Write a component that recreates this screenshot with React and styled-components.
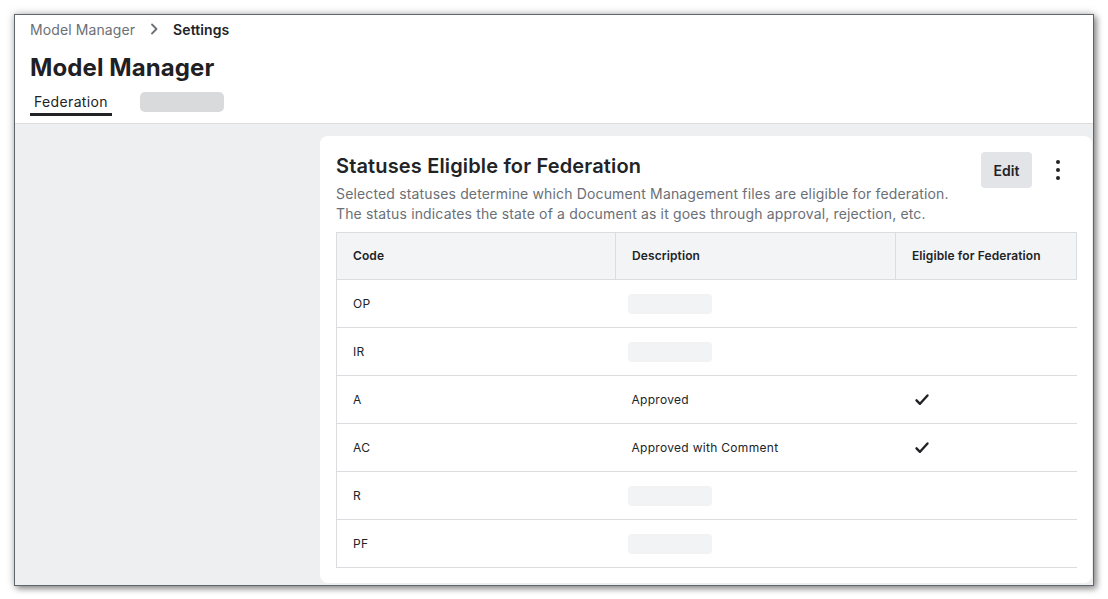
import React from "react";
import styled, { createGlobalStyle } from "styled-components";

const Global = createGlobalStyle`
  html, body { margin: 0; padding: 0; background: #ffffff; }
  body { font-family: Inter, "Noto Sans", "Liberation Sans", sans-serif; color: #222326; }
  * { box-sizing: border-box; }
`;

const Stage = styled.div`
  padding: 14px;
  width: 1108px;
  height: 599px;
`;

const Window = styled.div`
  width: 1080px;
  height: 572px;
  border: 1px solid #5d656e;
  box-shadow: 0 0 8px rgba(0, 0, 0, 0.28), 3px 3px 6px rgba(0, 0, 0, 0.35);
  display: flex;
  flex-direction: column;
  overflow: hidden;
  background: #fff;
`;

const Header = styled.header`
  padding: 4px 15px 0;
  border-bottom: 1px solid #dcdde0;
  flex: 0 0 auto;
  height: 109px;
`;

const Crumbs = styled.nav`
  display: flex;
  align-items: center;
  height: 20px;
  font-size: 14px;
  gap: 11px;
`;

const Crumb = styled.span`
  color: ${(p) => (p.$current ? "#222326" : "#6b6f76")};
  font-weight: ${(p) => (p.$current ? 600 : 400)};
  letter-spacing: 0.1px;
`;

const Title = styled.h1`
  margin: 14px 0 0;
  font-size: 24px;
  line-height: 30px;
  font-weight: 700;
  color: #1f2023;
  letter-spacing: 0.1px;
`;

const Tabs = styled.div`
  display: flex;
  align-items: flex-start;
  gap: 28px;
  margin-top: 9px;
`;

const Tab = styled.div`
  font-size: 14px;
  line-height: 20px;
  padding: 0 4px 1px;
  border-bottom: 3px solid #222326;
  color: #222326;
  letter-spacing: 0.35px;
`;

const TabSkeleton = styled.div`
  width: 84px;
  height: 20px;
  border-radius: 5px;
  background: #d9dadc;
`;

const Main = styled.main`
  flex: 1;
  background: #eeeff1;
  padding: 12px 1px 0 305px;
`;

const Card = styled.section`
  background: #fff;
  border-radius: 8px;
  padding: 16px;
  height: 447px;
`;

const CardHead = styled.div`
  display: flex;
  align-items: flex-start;
  justify-content: space-between;
`;

const CardTitle = styled.h2`
  margin: 0;
  font-size: 20px;
  line-height: 28px;
  font-weight: 600;
  color: #222326;
  letter-spacing: 0.15px;
`;

const Desc = styled.p`
  margin: 4px 0 0;
  font-size: 14px;
  line-height: 20px;
  color: #6b6f76;
  letter-spacing: 0.15px;
`;

const Actions = styled.div`
  display: flex;
  align-items: center;
  gap: 8px;
`;

const EditButton = styled.button`
  font-family: inherit;
  width: 51px;
  height: 36px;
  border: none;
  border-radius: 4px;
  background: #e2e4e7;
  font-size: 14px;
  font-weight: 600;
  color: #222326;
`;

const KebabButton = styled.button`
  width: 36px;
  height: 36px;
  border: none;
  background: transparent;
  display: flex;
  flex-direction: column;
  align-items: center;
  justify-content: center;
  gap: 4px;
  padding: 0;
`;

const Dot = styled.span`
  width: 4px;
  height: 4px;
  border-radius: 50%;
  background: #222326;
`;

const Table = styled.table`
  margin-top: 8px;
  width: 740px;
  border-collapse: collapse;
  table-layout: fixed;
  font-size: 12px;
  letter-spacing: 0.3px;
`;

const Th = styled.th`
  height: 47px;
  text-align: left;
  font-weight: 600;
  padding: 0 16px;
  background: #f3f4f6;
  border: 1px solid #dadcdf;
  color: #222326;
  letter-spacing: 0.1px;
  padding-bottom: 1px;
`;

const Td = styled.td`
  height: 48px;
  padding: 0 16px;
  border-bottom: 1px solid #dadcdf;
  color: #222326;
  &:first-child { border-left: 1px solid #dadcdf; }
`;

const Skeleton = styled.div`
  width: 84px;
  height: 20px;
  border-radius: 4px;
  background: #f2f3f5;
  margin-left: -4px;
`;

const Chevron = () => (
  <svg width="16" height="16" viewBox="0 0 16 16" fill="none">
    <path d="M6 3.5 L10.5 8 L6 12.5" stroke="#6b6f76" strokeWidth="1.8" strokeLinecap="round" strokeLinejoin="round" />
  </svg>
);

const Check = () => (
  <svg width="16" height="16" viewBox="0 0 16 16" fill="none" style={{ display: "block", marginLeft: 2 }}>
    <path d="M2.5 8.3 L6 11.8 L13.5 3.5" stroke="#222326" strokeWidth="2.4" strokeLinecap="round" strokeLinejoin="round" />
  </svg>
);

const rows = [
  { code: "OP" },
  { code: "IR" },
  { code: "A", desc: "Approved", eligible: true },
  { code: "AC", desc: "Approved with Comment", eligible: true },
  { code: "R" },
  { code: "PF" },
];

export default function App() {
  return (
    <>
      <Global />
      <Stage>
        <Window>
          <Header>
            <Crumbs>
              <Crumb>Model Manager</Crumb>
              <Chevron />
              <Crumb $current>Settings</Crumb>
            </Crumbs>
            <Title>Model Manager</Title>
            <Tabs>
              <Tab>Federation</Tab>
              <TabSkeleton />
            </Tabs>
          </Header>
          <Main>
            <Card>
              <CardHead>
                <div>
                  <CardTitle>Statuses Eligible for Federation</CardTitle>
                  <Desc>
                    Selected statuses determine which Document Management files are eligible for federation.
                    <br />
                    The status indicates the state of a document as it goes through approval, rejection, etc.
                  </Desc>
                </div>
                <Actions>
                  <EditButton>Edit</EditButton>
                  <KebabButton aria-label="More">
                    <Dot />
                    <Dot />
                    <Dot />
                  </KebabButton>
                </Actions>
              </CardHead>
              <Table>
                <colgroup>
                  <col style={{ width: 279 }} />
                  <col style={{ width: 280 }} />
                  <col style={{ width: 181 }} />
                </colgroup>
                <thead>
                  <tr>
                    <Th>Code</Th>
                    <Th>Description</Th>
                    <Th>Eligible for Federation</Th>
                  </tr>
                </thead>
                <tbody>
                  {rows.map((r) => (
                    <tr key={r.code}>
                      <Td>{r.code}</Td>
                      <Td>{r.desc ? r.desc : <Skeleton />}</Td>
                      <Td>{r.eligible ? <Check /> : null}</Td>
                    </tr>
                  ))}
                </tbody>
              </Table>
            </Card>
          </Main>
        </Window>
      </Stage>
    </>
  );
}
